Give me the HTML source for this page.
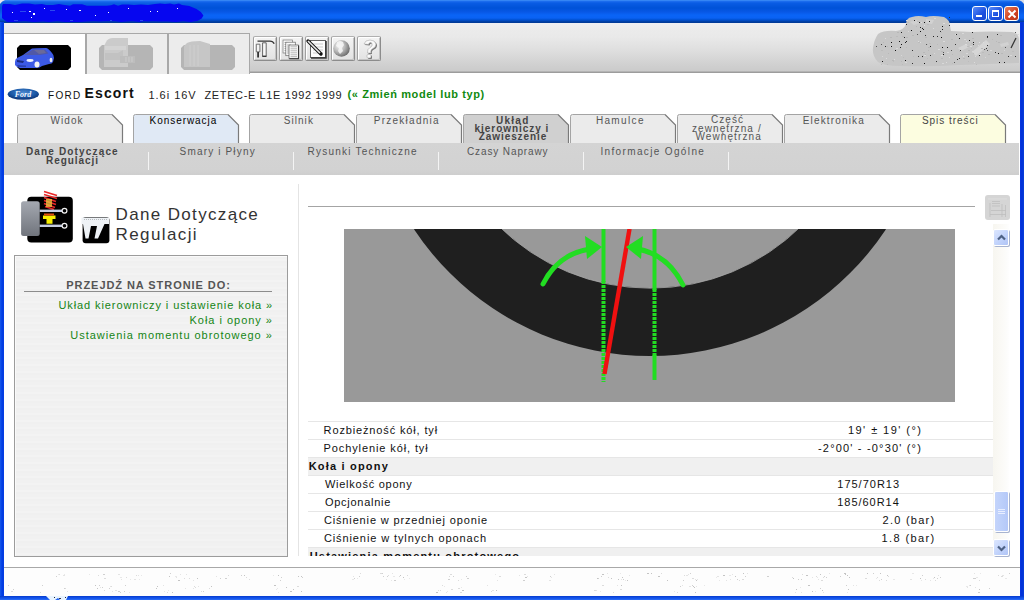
<!DOCTYPE html>
<html><head><meta charset="utf-8">
<style>
*{margin:0;padding:0;box-sizing:border-box}
html,body{width:1024px;height:600px;overflow:hidden;background:#fff;font-family:"Liberation Sans",sans-serif}
.a{position:absolute}
.t{position:absolute;white-space:nowrap;line-height:1}
#title{left:0;top:0;width:1024px;height:23px;background:linear-gradient(#4a9af8 0,#2070f0 1px,#0a5ce4 3px,#0052d8 8px,#0858e6 12px,#0a64f6 15px,#0a62f4 18px,#0050d0 20px,#003a98 22px,#003a98 23px)}
#lb{left:0;top:22px;width:4px;height:578px;background:linear-gradient(90deg,#1a5ae8,#0a4ae8 1px,#0038e0 3px,#0a44e8)}
#rb{left:1020px;top:22px;width:4px;height:578px;background:linear-gradient(90deg,#0838e0,#0030d8 2px,#0a40d8)}
#bb{left:0;top:596px;width:1024px;height:4px;background:linear-gradient(#0838c8,#0a48e0 1px,#1a5cf0 3px,#3070f4 4px)}
.tab{position:absolute;top:114px;height:30px;border:1px solid #9a9a9a;border-bottom:none;border-radius:3px 0 0 0;background:#ebebeb}
.tab .c{position:absolute;right:-1px;top:-1px;width:11px;height:11px;overflow:hidden}
.tl{top:116px;text-align:center;font-size:10px;color:#555;letter-spacing:0.6px}
.tabt{position:absolute;top:0;left:0;width:100%;text-align:center;font-size:10px;color:#555;letter-spacing:0.6px}
.sep{position:absolute;top:152px;width:1px;height:18px;background:#f4f4f4}
.sub{position:absolute;top:146px;font-size:10px;color:#555;letter-spacing:0.9px;white-space:nowrap;line-height:1}
.tb{position:absolute;top:36px;width:24px;height:25px;border:1px solid #8c8c8c;border-top-color:#b0b0b0;border-left-color:#a0a0a0;border-radius:2px;background:linear-gradient(#f4f4f4,#e2e2e2);box-shadow:inset 1px 1px 0 #fff,inset -1px -1px 0 #c4c4c4}
.sbb{position:absolute;left:993px;width:16px;border:1px solid #fff;border-radius:2px;background:linear-gradient(135deg,#dce6fe,#c0d2fb 60%,#b0c4f6);box-shadow:1px 1px 0 #a8b4d0}
.row{position:absolute;left:308px;width:685px;height:18px;border-top:1px solid #e6e6e6}
.rt{position:absolute;font-size:11px;color:#111;white-space:nowrap;line-height:1;letter-spacing:0.5px}
</style></head><body>
<!-- title bar -->
<div id="title" class="a"></div>
<svg class="a" style="left:0;top:0" width="210" height="23" viewBox="0 0 210 23">
<path d="M3.0 4.0 L10.0 4.0 L15.0 5.0 L22.0 3.5 L29.0 3.5 L35.0 4.5 L42.0 4.0 L46.0 5.0 L53.0 5.0 L59.0 4.0 L63.0 4.8 L70.0 5.8 L73.0 4.3 L77.0 4.3 L82.0 4.3 L87.0 5.8 L94.0 5.8 L100.0 5.8 L107.0 5.8 L111.0 5.3 L114.0 4.3 L118.0 5.8 L122.0 4.5 L128.0 4.5 L134.0 5.0 L141.0 4.5 L148.0 5.0 L155.0 4.0 L160.0 3.5 L165.0 4.0 L170.0 3.5 L174.0 4.5 L179.0 3.5 L182.0 5.0 L189.3 6.0 L196.5 9.0 L200.9 12.0 L203.4 15.5 L201.7 18.5 L197.4 21.0 L195.0 21.3 L191.0 21.9 L183.0 21.3 L176.0 21.9 L168.0 21.6 L160.0 21.6 L152.0 21.3 L148.0 21.6 L144.0 21.3 L140.0 21.9 L132.0 21.3 L127.0 21.6 L121.0 21.9 L115.0 21.3 L106.0 21.3 L100.0 21.6 L94.0 21.3 L87.0 21.6 L80.0 21.9 L73.0 21.9 L65.0 21.9 L57.0 21.3 L49.0 21.9 L43.0 21.6 L34.0 21.9 L25.0 21.3 L19.0 21.6 L13.0 21.9 L7.0 21.9 L2.0 18.0 L2.0 6.0Z" fill="#0606f0"/>
<g fill="#fff"><rect x="12" y="12" width="1" height="1"/><rect x="29" y="11" width="2" height="1"/><rect x="33" y="13" width="2" height="2"/><rect x="44" y="8" width="1" height="1"/><rect x="31" y="17" width="1" height="1"/><rect x="66" y="9" width="1" height="1"/><rect x="79" y="10" width="2" height="1"/><rect x="95" y="15" width="1" height="1"/><rect x="128" y="8" width="1" height="1"/><rect x="157" y="11" width="1" height="1"/><rect x="177" y="8" width="1" height="1"/><rect x="150" y="11" width="1" height="1"/><rect x="108" y="12" width="1" height="1"/></g>
<g fill="#2a48f0"><rect x="20" y="11" width="6" height="1"/><rect x="50" y="10" width="5" height="1"/><rect x="70" y="20" width="3" height="1"/><rect x="110" y="20" width="2" height="1"/><rect x="14" y="20" width="4" height="1"/><rect x="140" y="20" width="3" height="1"/></g>
</svg>
<!-- window buttons -->
<div class="a" style="left:972px;top:6px;width:15px;height:15px;border:1px solid #fff;border-radius:3px;background:linear-gradient(135deg,#5a8cf8,#1c50e0 60%,#1a48d0)"><div class="a" style="left:3px;top:8px;width:6px;height:2px;background:#fff"></div></div>
<div class="a" style="left:988px;top:6px;width:15px;height:15px;border:1px solid #fff;border-radius:3px;background:linear-gradient(135deg,#5a8cf8,#1c50e0 60%,#1a48d0)"><div class="a" style="left:3px;top:3px;width:7px;height:7px;border:1px solid #fff;border-top-width:2px"></div></div>
<div class="a" style="left:1004px;top:6px;width:15px;height:15px;border:1px solid #fff;border-radius:3px;background:linear-gradient(135deg,#e8805a,#d04020 60%,#b83818)">
<svg class="a" style="left:2px;top:2px" width="10" height="10" viewBox="0 0 10 10"><path d="M1.5 1.5L8.5 8.5M8.5 1.5L1.5 8.5" stroke="#fff" stroke-width="2"/></svg></div>
<div id="lb" class="a"></div><div id="rb" class="a"></div><div id="bb" class="a"></div>
<svg class="a" style="left:0;top:0" width="6" height="6"><path d="M0 0H5Q2 1 0 4Z" fill="#e8e4ec"/></svg>
<svg class="a" style="left:1018px;top:0" width="6" height="6"><path d="M6 0H1Q4 1 6 4Z" fill="#d8dce4"/></svg>
<svg class="a" style="left:44px;top:594px" width="28" height="6" viewBox="44 594 28 6"><path d="M46 596H68L66 600H60L58 598L55 600H50Z" fill="#e8f4ff"/><rect x="54" y="597" width="1" height="1" fill="#223"/><rect x="59" y="598" width="2" height="1" fill="#334"/><rect x="65" y="597" width="1" height="1" fill="#223"/></svg>

<!-- top strip -->
<div class="a" style="left:4px;top:23px;width:1016px;height:49px;background:linear-gradient(#eeeef2 0,#ebebeb 6px,#e9e9e9 14px,#dedede 28px,#d0d0d0 42px,#cacaca 49px)"></div>
<div class="a" style="left:4px;top:71px;width:1016px;height:1px;background:#b4b4b4"></div>
<div class="a" style="left:4px;top:72px;width:1016px;height:1px;background:#9c9c9c"></div>
<div class="a" style="left:4px;top:33px;width:246px;height:1px;background:#a8a8a8"></div>
<!-- big tabs -->
<div class="a" style="left:4px;top:34px;width:81px;height:40px;background:#fff"></div>
<div class="a" style="left:85px;top:34px;width:2px;height:40px;background:#a8a8a8"></div>
<div class="a" style="left:87px;top:34px;width:80px;height:40px;background:#ececec"></div>
<div class="a" style="left:167px;top:34px;width:2px;height:40px;background:#a8a8a8"></div>
<div class="a" style="left:169px;top:34px;width:80px;height:40px;background:#ececec"></div>
<div class="a" style="left:249px;top:34px;width:1px;height:40px;background:#a8a8a8"></div>

<!-- big tab icons -->
<svg class="a" style="left:0;top:30px" width="250" height="45" viewBox="0 30 250 45">
<path d="M20 45H68L71 48V67L68 70H20L17 67V48Z" fill="#000"/>
<path d="M15 62Q15 59 17 58L23 55L32 48.5Q34 48 46 48Q48 48 52 53Q54 55 54 58L53 62Q52 64 49 64L42 66Q40 68 36 68L20 68Q16 67 15 65Z" fill="#3c5ae6"/>
<path d="M24 55L33 49.5H45L48.5 53.5L40 55Z" fill="#5058a8"/>
<path d="M34 50L44 50L46 53L39 54Z" fill="#6a6a9a"/>
<path d="M17 60L24 61L23 63L17 62Z" fill="#1a2a80"/>
<ellipse cx="30" cy="60.5" rx="3.5" ry="1.4" fill="#f0f4ff"/>
<path d="M17 65L26 65.5L26 67L18 67Z" fill="#2a40b0"/>
<ellipse cx="37" cy="64.5" rx="2.5" ry="3" fill="#f4f4f4"/>
<ellipse cx="51" cy="60" rx="1.4" ry="2.2" fill="#e8e8f0"/>
<path d="M102 45H150L153 48V67L150 70H102L99 67V48Z" fill="#b5b5b5"/>
<path d="M106 42Q108 38 113 38H128V67H104V46Z" fill="#cbcbcb"/>
<path d="M105 46H126V50H105Z" fill="#d4d4d4"/>
<path d="M105 53H118L123 50V60H105Z" fill="#c2c2c2"/>
<path d="M120 56H135V63H120Z" fill="#bdbdbd"/>
<path d="M126 57v5M129 57v5M132 57v5" stroke="#d0d0d0" stroke-width="0.8"/>
<path d="M184 45H232L235 48V67L232 70H184L181 67V48Z" fill="#b5b5b5"/>
<path d="M187 43Q190 41 200 41L210 44V67H184V46Z" fill="#c6c6c6"/>
<path d="M190 45v21M194 45v21M198 45v21" stroke="#d2d2d2" stroke-width="0.8"/>
</svg>
<!-- toolbar buttons -->
<div class="tb" style="left:253px"></div><div class="tb" style="left:279px"></div><div class="tb" style="left:305px"></div><div class="tb" style="left:331px"></div><div class="tb" style="left:357px"></div>
<svg class="a" style="left:250px;top:32px" width="135" height="32" viewBox="250 32 135 32">
<defs><radialGradient id="gl" cx="0.35" cy="0.35" r="0.7"><stop offset="0" stop-color="#f4f4f4"/><stop offset="0.5" stop-color="#b8b8b8"/><stop offset="1" stop-color="#6a6a6a"/></radialGradient></defs>
<path d="M256.3 44.2h3.6v7.6h-3.6z" fill="#f4f4f4" stroke="#555" stroke-width="0.8"/>
<path d="M258.1 52v5.5" stroke="#333" stroke-width="1.8"/>
<path d="M262.6 42.8h3.6v13.4h-3.6z" fill="#f8f8f8" stroke="#444" stroke-width="0.8"/>
<path d="M257.5 41.2H270Q273 41.2 274.2 43.8" fill="none" stroke="#333" stroke-width="1.3"/>
<path d="M262.3 56.3h4.2" stroke="#222" stroke-width="1"/>
<rect x="283" y="40" width="9.5" height="13" fill="#fafafa" stroke="#777" stroke-width="0.7"/>
<path d="M284.5 42.5h4M284.5 44.5h4M284.5 46.5h4M284.5 48.5h4M284.5 50.5h4" stroke="#888" stroke-width="0.6"/>
<rect x="285.8" y="42.2" width="9.5" height="13.5" fill="#fafafa" stroke="#666" stroke-width="0.7"/>
<path d="M287 45h4M287 47h4M287 49h4M287 51h4M287 53h4" stroke="#888" stroke-width="0.6"/>
<rect x="289" y="45" width="9.3" height="13.3" fill="#fcfcfc" stroke="#555" stroke-width="0.7"/>
<path d="M290.5 46.8h6.5M290.5 48.8h6.5M290.5 50.8h6.5M290.5 52.8h6.5M290.5 54.8h6.5M290.5 56.6h6.5" stroke="#999" stroke-width="0.7"/>
<path d="M298.6 45.5v13.2h-9.3" fill="none" stroke="#333" stroke-width="1.1"/>

<rect x="310.5" y="40.5" width="15" height="17" fill="#fcfcfc" stroke="#555" stroke-width="0.9"/>
<path d="M326 41v17h-15" stroke="#333" stroke-width="1.5" fill="none"/>
<path d="M313 44h10M313 47h10M313 50h10M313 53h10" stroke="#aaa" stroke-width="0.6"/>
<path d="M308 41L321 54" stroke="#111" stroke-width="3.4" stroke-linecap="round"/>
<path d="M308 41L320 53" stroke="#e8e8e8" stroke-width="1.6"/>
<circle cx="341.5" cy="48.5" r="8.3" fill="url(#gl)"/>
<path d="M337 42q3-2 6 0l1 3-2 3 1 3-3 3-2-3 1-3-3-2z" fill="#f6f6f6" opacity="0.85"/>
<path d="M364 44q1-4 6-4t6 4q0 3-3 4.5t-2 4.5h-3.5q-0.5-4 2.5-5.5t2-3.5q0-1.5-1.5-1.5t-2 2z" fill="#777" transform="translate(1 1)"/>
<path d="M364 44q1-4 6-4t6 4q0 3-3 4.5t-2 4.5h-3.5q-0.5-4 2.5-5.5t2-3.5q0-1.5-1.5-1.5t-2 2z" fill="#fafafa" stroke="#999" stroke-width="0.5"/>
<rect x="367" y="54.5" width="4" height="3.5" rx="1" fill="#777" transform="translate(1 1)"/>
<rect x="367" y="54.5" width="4" height="3.5" rx="1" fill="#fafafa" stroke="#999" stroke-width="0.5"/>
</svg>
<!-- top-right faded image -->
<svg class="a" style="left:866px;top:12px" width="154" height="62" viewBox="866 12 154 62">
<path d="M906 24Q906 18 912 17Q918 15 926 17Q932 15 944 17Q950 20 950 26L951 31L972 32Q990 31 1012 32Q1019 33 1019 40V63Q990 64 960 65Q930 67 900 66Q884 66 878 62Q872 56 873 48Q874 40 878 34Q884 30 896 31Q904 30 906 24Z" fill="#c6c6c6"/>
<path d="M972 52L986 40L990 44L976 56Z" fill="#d6d6d6"/>
<path d="M958 48l8-4 3 3-8 4z" fill="#d4d4d4"/>
<path d="M1000 44l8-2 1 3-8 2z" fill="#d2d2d2"/>
<path d="M910 22l6-2 4 3-6 2z" fill="#d0d0d0"/><path d="M926 19l8 1-2 4-6-1z" fill="#d2d2d2"/>
<path d="M1011 48L1016 38" stroke="#333" stroke-width="1.2"/>
<rect x="952" y="54" width="1" height="1" fill="#b8b8b8"/><rect x="921" y="22" width="1" height="1" fill="#dcdcdc"/><rect x="905" y="62" width="2" height="1" fill="#d8d8d8"/><rect x="983" y="42" width="1" height="1" fill="#dcdcdc"/><rect x="975" y="56" width="1" height="1" fill="#d8d8d8"/><rect x="923" y="52" width="2" height="1" fill="#b8b8b8"/><rect x="901" y="61" width="1" height="1" fill="#b8b8b8"/><rect x="890" y="46" width="1" height="1" fill="#d8d8d8"/><rect x="881" y="64" width="1" height="1" fill="#bcbcbc"/><rect x="920" y="27" width="1" height="1" fill="#d8d8d8"/><rect x="916" y="26" width="1" height="1" fill="#b8b8b8"/><rect x="896" y="36" width="2" height="1" fill="#bcbcbc"/><rect x="981" y="48" width="2" height="1" fill="#b8b8b8"/><rect x="925" y="54" width="1" height="1" fill="#b8b8b8"/><rect x="918" y="42" width="2" height="1" fill="#bcbcbc"/><rect x="966" y="41" width="1" height="1" fill="#dcdcdc"/><rect x="896" y="48" width="2" height="1" fill="#d8d8d8"/><rect x="893" y="61" width="1" height="1" fill="#bcbcbc"/><rect x="1001" y="53" width="2" height="1" fill="#b8b8b8"/><rect x="943" y="23" width="2" height="1" fill="#dcdcdc"/><rect x="906" y="37" width="2" height="1" fill="#b8b8b8"/><rect x="918" y="41" width="1" height="1" fill="#dcdcdc"/><rect x="890" y="37" width="2" height="1" fill="#b8b8b8"/><rect x="963" y="56" width="1" height="1" fill="#d8d8d8"/><rect x="941" y="58" width="2" height="1" fill="#b8b8b8"/><rect x="927" y="58" width="1" height="1" fill="#bcbcbc"/><rect x="971" y="48" width="1" height="1" fill="#bcbcbc"/><rect x="902" y="64" width="1" height="1" fill="#bcbcbc"/><rect x="901" y="55" width="1" height="1" fill="#d8d8d8"/><rect x="937" y="44" width="1" height="1" fill="#bcbcbc"/><rect x="922" y="57" width="1" height="1" fill="#bcbcbc"/><rect x="897" y="32" width="2" height="1" fill="#b8b8b8"/><rect x="959" y="51" width="1" height="1" fill="#bcbcbc"/><rect x="985" y="57" width="1" height="1" fill="#d8d8d8"/><rect x="970" y="46" width="2" height="1" fill="#dcdcdc"/><rect x="1010" y="55" width="2" height="1" fill="#d8d8d8"/><rect x="998" y="42" width="2" height="1" fill="#b8b8b8"/><rect x="951" y="39" width="2" height="1" fill="#b8b8b8"/><rect x="941" y="51" width="2" height="1" fill="#b8b8b8"/><rect x="934" y="53" width="1" height="1" fill="#d8d8d8"/><rect x="976" y="64" width="1" height="1" fill="#bcbcbc"/><rect x="952" y="63" width="1" height="1" fill="#bcbcbc"/><rect x="929" y="43" width="2" height="1" fill="#bcbcbc"/><rect x="934" y="18" width="2" height="1" fill="#d8d8d8"/><rect x="908" y="31" width="1" height="1" fill="#d8d8d8"/><rect x="978" y="45" width="1" height="1" fill="#d8d8d8"/><rect x="885" y="38" width="1" height="1" fill="#dcdcdc"/><rect x="965" y="44" width="2" height="1" fill="#dcdcdc"/><rect x="988" y="54" width="2" height="1" fill="#b8b8b8"/><rect x="946" y="62" width="1" height="1" fill="#dcdcdc"/><rect x="1000" y="35" width="2" height="1" fill="#b8b8b8"/><rect x="941" y="55" width="2" height="1" fill="#dcdcdc"/><rect x="933" y="28" width="1" height="1" fill="#dcdcdc"/><rect x="882" y="56" width="1" height="1" fill="#d8d8d8"/><rect x="941" y="32" width="1" height="1" fill="#bcbcbc"/><rect x="928" y="50" width="1" height="1" fill="#b8b8b8"/><rect x="894" y="59" width="1" height="1" fill="#dcdcdc"/><rect x="967" y="46" width="2" height="1" fill="#bcbcbc"/><rect x="925" y="37" width="2" height="1" fill="#b8b8b8"/><rect x="906" y="20" width="2" height="1" fill="#d8d8d8"/><rect x="926" y="44" width="2" height="1" fill="#bcbcbc"/><rect x="955" y="34" width="2" height="1" fill="#dcdcdc"/><rect x="966" y="53" width="2" height="1" fill="#d8d8d8"/><rect x="982" y="52" width="2" height="1" fill="#bcbcbc"/><rect x="892" y="60" width="2" height="1" fill="#b8b8b8"/><rect x="955" y="34" width="1" height="1" fill="#dcdcdc"/><rect x="963" y="58" width="2" height="1" fill="#b8b8b8"/><rect x="902" y="36" width="2" height="1" fill="#bcbcbc"/><rect x="984" y="49" width="2" height="1" fill="#b8b8b8"/><rect x="974" y="62" width="1" height="1" fill="#dcdcdc"/><rect x="964" y="39" width="2" height="1" fill="#d8d8d8"/><rect x="973" y="53" width="1" height="1" fill="#bcbcbc"/><rect x="1016" y="39" width="1" height="1" fill="#bcbcbc"/><rect x="917" y="21" width="2" height="1" fill="#bcbcbc"/><rect x="1017" y="34" width="2" height="1" fill="#d8d8d8"/><rect x="888" y="53" width="1" height="1" fill="#b8b8b8"/><rect x="942" y="63" width="2" height="1" fill="#d8d8d8"/><rect x="908" y="22" width="1" height="1" fill="#bcbcbc"/><rect x="928" y="47" width="2" height="1" fill="#b8b8b8"/><rect x="972" y="38" width="2" height="1" fill="#b8b8b8"/><rect x="906" y="47" width="1" height="1" fill="#bcbcbc"/><rect x="883" y="42" width="1" height="1" fill="#b8b8b8"/><rect x="990" y="50" width="2" height="1" fill="#d8d8d8"/><rect x="979" y="42" width="1" height="1" fill="#dcdcdc"/><rect x="913" y="56" width="1" height="1" fill="#bcbcbc"/><rect x="971" y="43" width="2" height="1" fill="#b8b8b8"/><rect x="887" y="46" width="1" height="1" fill="#b8b8b8"/><rect x="949" y="57" width="1" height="1" fill="#dcdcdc"/><rect x="887" y="64" width="1" height="1" fill="#bcbcbc"/><rect x="922" y="27" width="1" height="1" fill="#b8b8b8"/><rect x="932" y="54" width="1" height="1" fill="#bcbcbc"/><rect x="943" y="41" width="2" height="1" fill="#dcdcdc"/><rect x="1012" y="51" width="2" height="1" fill="#bcbcbc"/><rect x="996" y="41" width="1" height="1" fill="#b8b8b8"/><rect x="927" y="24" width="2" height="1" fill="#bcbcbc"/><rect x="886" y="58" width="1" height="1" fill="#dcdcdc"/><rect x="992" y="39" width="1" height="1" fill="#bcbcbc"/><rect x="979" y="54" width="2" height="1" fill="#dcdcdc"/><rect x="938" y="49" width="2" height="1" fill="#dcdcdc"/><rect x="1004" y="50" width="1" height="1" fill="#d8d8d8"/><rect x="924" y="25" width="1" height="1" fill="#dcdcdc"/><rect x="962" y="33" width="2" height="1" fill="#d8d8d8"/><rect x="1011" y="48" width="1" height="1" fill="#b8b8b8"/><rect x="920" y="42" width="1" height="1" fill="#dcdcdc"/><rect x="881" y="50" width="2" height="1" fill="#bcbcbc"/><rect x="912" y="35" width="2" height="1" fill="#b8b8b8"/><rect x="1014" y="35" width="1" height="1" fill="#bcbcbc"/><rect x="907" y="22" width="2" height="1" fill="#bcbcbc"/><rect x="903" y="57" width="1" height="1" fill="#bcbcbc"/><rect x="968" y="61" width="1" height="1" fill="#bcbcbc"/><rect x="947" y="52" width="2" height="1" fill="#d8d8d8"/><rect x="924" y="55" width="2" height="1" fill="#dcdcdc"/><rect x="968" y="50" width="2" height="1" fill="#b8b8b8"/><rect x="972" y="51" width="2" height="1" fill="#d8d8d8"/><rect x="920" y="27" width="1" height="1" fill="#222"/><rect x="919" y="22" width="1" height="1" fill="#222"/><rect x="895" y="50" width="1" height="1" fill="#111"/><rect x="973" y="44" width="1" height="1" fill="#333"/><rect x="920" y="31" width="1" height="1" fill="#111"/><rect x="955" y="44" width="1" height="1" fill="#333"/><rect x="947" y="47" width="1" height="1" fill="#111"/><rect x="937" y="36" width="1" height="1" fill="#333"/><rect x="899" y="41" width="1" height="1" fill="#111"/><rect x="885" y="46" width="1" height="1" fill="#222"/><rect x="973" y="42" width="1" height="1" fill="#111"/><rect x="941" y="37" width="1" height="1" fill="#111"/><rect x="986" y="48" width="1" height="1" fill="#333"/><rect x="905" y="42" width="1" height="1" fill="#222"/><rect x="949" y="17" width="1" height="1" fill="#333"/><rect x="926" y="44" width="1" height="1" fill="#555"/><rect x="956" y="34" width="1" height="1" fill="#222"/><rect x="995" y="52" width="1" height="1" fill="#333"/><rect x="918" y="56" width="1" height="1" fill="#333"/><rect x="930" y="55" width="1" height="1" fill="#333"/><rect x="912" y="63" width="1" height="1" fill="#333"/><rect x="972" y="32" width="1" height="1" fill="#222"/><rect x="997" y="34" width="1" height="1" fill="#333"/><rect x="930" y="46" width="1" height="1" fill="#111"/><rect x="924" y="63" width="1" height="1" fill="#111"/><rect x="917" y="34" width="1" height="1" fill="#555"/><rect x="987" y="37" width="1" height="1" fill="#333"/><rect x="876" y="46" width="1" height="1" fill="#555"/><rect x="891" y="46" width="1" height="1" fill="#111"/><rect x="987" y="50" width="1" height="1" fill="#555"/><rect x="959" y="38" width="1" height="1" fill="#111"/><rect x="891" y="42" width="1" height="1" fill="#111"/><rect x="969" y="40" width="1" height="1" fill="#111"/><rect x="901" y="32" width="1" height="1" fill="#222"/><rect x="900" y="47" width="1" height="1" fill="#222"/><rect x="949" y="25" width="1" height="1" fill="#333"/><rect x="959" y="58" width="1" height="1" fill="#222"/><rect x="933" y="36" width="1" height="1" fill="#222"/><rect x="922" y="56" width="1" height="1" fill="#222"/><rect x="923" y="29" width="1" height="1" fill="#222"/><rect x="906" y="24" width="1" height="1" fill="#222"/><rect x="882" y="61" width="1" height="1" fill="#111"/><rect x="942" y="26" width="1" height="1" fill="#111"/><rect x="942" y="29" width="1" height="1" fill="#222"/><rect x="1005" y="47" width="1" height="1" fill="#555"/><rect x="987" y="36" width="1" height="1" fill="#111"/><rect x="943" y="54" width="1" height="1" fill="#111"/><rect x="943" y="52" width="1" height="1" fill="#555"/><rect x="906" y="41" width="1" height="1" fill="#222"/><rect x="940" y="31" width="1" height="1" fill="#333"/><rect x="901" y="44" width="1" height="1" fill="#111"/><rect x="922" y="28" width="1" height="1" fill="#222"/><rect x="960" y="50" width="1" height="1" fill="#333"/><rect x="929" y="21" width="1" height="1" fill="#222"/><rect x="987" y="45" width="1" height="1" fill="#333"/><rect x="924" y="22" width="1" height="1" fill="#111"/><rect x="951" y="50" width="1" height="1" fill="#555"/><rect x="881" y="44" width="1" height="1" fill="#555"/><rect x="942" y="47" width="1" height="1" fill="#111"/><rect x="957" y="59" width="1" height="1" fill="#333"/><rect x="1004" y="62" width="1" height="1" fill="#222"/><rect x="998" y="53" width="1" height="1" fill="#111"/><rect x="984" y="49" width="1" height="1" fill="#555"/><rect x="1015" y="56" width="1" height="1" fill="#333"/><rect x="1015" y="32" width="1" height="1" fill="#555"/><rect x="925" y="35" width="1" height="1" fill="#333"/><rect x="914" y="20" width="1" height="1" fill="#222"/><rect x="904" y="37" width="1" height="1" fill="#222"/><rect x="979" y="55" width="1" height="1" fill="#111"/><rect x="905" y="60" width="1" height="1" fill="#111"/><rect x="911" y="30" width="1" height="1" fill="#111"/><rect x="954" y="62" width="1" height="1" fill="#555"/><rect x="999" y="62" width="1" height="1" fill="#111"/><rect x="936" y="61" width="1" height="1" fill="#333"/><rect x="968" y="56" width="1" height="1" fill="#222"/><rect x="912" y="50" width="1" height="1" fill="#333"/><rect x="1008" y="56" width="1" height="1" fill="#333"/>
</svg>
<!-- content placeholder -->
<!-- ford line -->
<svg class="a" style="left:6px;top:87px" width="36" height="15" viewBox="6 87 36 15">
<defs><radialGradient id="fg" cx="0.5" cy="0.35" r="0.65"><stop offset="0" stop-color="#4a8ad0"/><stop offset="0.6" stop-color="#1c5aa8"/><stop offset="1" stop-color="#0c3070"/></radialGradient></defs>
<ellipse cx="23.3" cy="94.2" rx="15.6" ry="5.6" fill="url(#fg)"/>
<text x="23" y="97" text-anchor="middle" font-family="Liberation Serif" font-style="italic" font-weight="bold" font-size="8" fill="#f4f8ff">Ford</text>
</svg>

<!-- nav tabs -->
<svg class="a" style="left:0;top:113px" width="1024" height="32"><path d="M17.5 32V3.5Q17.5 1.5 19.5 1.5H112.0L122.5 12V32Z" fill="#ebebeb"/><path d="M17.5 32V3.5Q17.5 1.5 19.5 1.5H112.0" fill="none" stroke="#a4a4a4" stroke-width="1"/><path d="M112.0 1.5L122.5 12V32" fill="none" stroke="#7a7a7a" stroke-width="1.2"/><path d="M133.5 32V3.5Q133.5 1.5 135.5 1.5H228.0L238.5 12V32Z" fill="#e0e9f5"/><path d="M133.5 32V3.5Q133.5 1.5 135.5 1.5H228.0" fill="none" stroke="#a4a4a4" stroke-width="1"/><path d="M228.0 1.5L238.5 12V32" fill="none" stroke="#7a7a7a" stroke-width="1.2"/><path d="M249.5 32V3.5Q249.5 1.5 251.5 1.5H344.0L354.5 12V32Z" fill="#ebebeb"/><path d="M249.5 32V3.5Q249.5 1.5 251.5 1.5H344.0" fill="none" stroke="#a4a4a4" stroke-width="1"/><path d="M344.0 1.5L354.5 12V32" fill="none" stroke="#7a7a7a" stroke-width="1.2"/><path d="M356.5 32V3.5Q356.5 1.5 358.5 1.5H451.0L461.5 12V32Z" fill="#ebebeb"/><path d="M356.5 32V3.5Q356.5 1.5 358.5 1.5H451.0" fill="none" stroke="#a4a4a4" stroke-width="1"/><path d="M451.0 1.5L461.5 12V32" fill="none" stroke="#7a7a7a" stroke-width="1.2"/><path d="M463.5 32V3.5Q463.5 1.5 465.5 1.5H558.0L568.5 12V32Z" fill="#d0d0d0"/><path d="M463.5 32V3.5Q463.5 1.5 465.5 1.5H558.0" fill="none" stroke="#a4a4a4" stroke-width="1"/><path d="M558.0 1.5L568.5 12V32" fill="none" stroke="#7a7a7a" stroke-width="1.2"/><path d="M570.5 32V3.5Q570.5 1.5 572.5 1.5H665.0L675.5 12V32Z" fill="#ebebeb"/><path d="M570.5 32V3.5Q570.5 1.5 572.5 1.5H665.0" fill="none" stroke="#a4a4a4" stroke-width="1"/><path d="M665.0 1.5L675.5 12V32" fill="none" stroke="#7a7a7a" stroke-width="1.2"/><path d="M677.5 32V3.5Q677.5 1.5 679.5 1.5H772.0L782.5 12V32Z" fill="#ebebeb"/><path d="M677.5 32V3.5Q677.5 1.5 679.5 1.5H772.0" fill="none" stroke="#a4a4a4" stroke-width="1"/><path d="M772.0 1.5L782.5 12V32" fill="none" stroke="#7a7a7a" stroke-width="1.2"/><path d="M784.5 32V3.5Q784.5 1.5 786.5 1.5H879.0L889.5 12V32Z" fill="#ebebeb"/><path d="M784.5 32V3.5Q784.5 1.5 786.5 1.5H879.0" fill="none" stroke="#a4a4a4" stroke-width="1"/><path d="M879.0 1.5L889.5 12V32" fill="none" stroke="#7a7a7a" stroke-width="1.2"/><path d="M900.5 32V3.5Q900.5 1.5 902.5 1.5H995.0L1005.5 12V32Z" fill="#fcfde0"/><path d="M900.5 32V3.5Q900.5 1.5 902.5 1.5H995.0" fill="none" stroke="#a4a4a4" stroke-width="1"/><path d="M995.0 1.5L1005.5 12V32" fill="none" stroke="#7a7a7a" stroke-width="1.2"/></svg>
<!-- sub nav -->
<div class="a" style="left:4px;top:143px;width:1015px;height:32px;background:linear-gradient(#d4d4d4,#d2d2d2 85%,#cecece)"></div>
<div class="sep" style="left:148px"></div>
<div class="sep" style="left:293px"></div>
<div class="sep" style="left:438px"></div>
<div class="sep" style="left:583px"></div>
<div class="sep" style="left:728px"></div>

<!-- left panel -->
<svg class="a" style="left:18px;top:186px" width="96" height="62" viewBox="18 186 96 62">
<defs><linearGradient id="tg" x1="0" x2="0" y1="0" y2="1"><stop offset="0" stop-color="#a4a8b0"/><stop offset="1" stop-color="#70747c"/></linearGradient></defs>
<rect x="27.3" y="196.8" width="45.5" height="45.8" rx="4" fill="#000"/>
<rect x="21.1" y="201.3" width="18.6" height="34.8" rx="2.5" fill="url(#tg)"/>
<path d="M44 191.5L57 195.5M44 194.5L57 198.5M44 197.5L56 201.5M44 200.5L56 204.5M44 203.5L55 207.5M45 206.5L54 209.5" stroke="#e82828" stroke-width="1.8"/>
<path d="M46 199h6v8h-6z" fill="#f0c040" opacity="0.8"/>
<path d="M39.7 210.8H62" stroke="#c4cce0" stroke-width="2.4"/><circle cx="64.5" cy="210.8" r="2.4" fill="#000" stroke="#f0f0f0" stroke-width="1.2"/>
<path d="M39.7 225.8H62" stroke="#c4cce0" stroke-width="2.4"/><circle cx="64.5" cy="225.8" r="2.4" fill="#000" stroke="#f0f0f0" stroke-width="1.2"/>
<path d="M43 215.5H55.5V219H52.5V223.8H46.5V219H43Z" fill="#f6ee00"/>
<path d="M44 213.5h10v2h-10z" fill="#e05010"/>
<rect x="82.6" y="217" width="26.8" height="26.3" rx="3" fill="#000"/>
<path d="M81.5 217.5H109V224H104.5L98 238.5H94.5L97 226H91L88.5 238.5H85.5L83 224H81.5Z" fill="#eef2f6"/>
<path d="M84 219.5h24" stroke="#b8bcc0" stroke-width="1" stroke-dasharray="1 1"/>
</svg>
<div class="a" style="left:298px;top:184px;width:1px;height:372px;background:#e4e4e4"></div>
<div class="a" style="left:14px;top:255px;width:274px;height:302px;border:1px solid #9c9c9c;background:repeating-linear-gradient(#f1f1f1 0,#f1f1f1 3px,#f3f3f3 3px,#f3f3f3 5px,#f0f0f0 5px,#f0f0f0 7px);box-shadow:inset 1px 1px 0 #fafafa"></div>
<div class="a" style="left:24px;top:291px;width:248px;height:1px;background:#8c8c8c"></div>

<!-- right content -->
<div class="a" style="left:308px;top:206px;width:667px;height:1px;background:#a4a4a4"></div>
<div class="a" style="left:344px;top:229px;width:611px;height:173px;background:#999;overflow:hidden">
<svg width="611" height="173" viewBox="344 229 611 173" style="display:block">
<defs><clipPath id="ring"><path d="M650 73m-283 0a283 283 0 1 0 566 0a283 283 0 1 0 -566 0zM650 73m-215 0a215 215 0 1 1 430 0a215 215 0 1 1 -430 0z" fill-rule="evenodd"/></clipPath></defs>
<path d="M650 73m-283 0a283 283 0 1 0 566 0a283 283 0 1 0 -566 0zM650 73m-215 0a215 215 0 1 1 430 0a215 215 0 1 1 -430 0z" fill="#1f1f1f" fill-rule="evenodd"/>
<circle cx="650" cy="73" r="215.2" fill="none" stroke="#a8a8a8" stroke-width="0.8"/>
<line x1="603.5" y1="281" x2="603.5" y2="382" stroke="#22dd22" stroke-width="4" stroke-dasharray="3 1"/>
<line x1="603.5" y1="229" x2="603.5" y2="282" stroke="#22dd22" stroke-width="4"/>
<line x1="654.5" y1="289" x2="654.5" y2="356" stroke="#22dd22" stroke-width="4" stroke-dasharray="3 1"/>
<line x1="654.5" y1="229" x2="654.5" y2="290" stroke="#22dd22" stroke-width="4"/>
<line x1="654.5" y1="355" x2="654.5" y2="380" stroke="#22dd22" stroke-width="4"/>
<line x1="629.5" y1="229" x2="604.5" y2="374" stroke="#f01010" stroke-width="4.4"/>
<path d="M543 284Q558 254 590 249" fill="none" stroke="#22dd22" stroke-width="5" stroke-linecap="round"/>
<path d="M602 247L585 236L587 259Z" fill="#22dd22"/>
<path d="M683 285Q668 255 638 249" fill="none" stroke="#22dd22" stroke-width="5" stroke-linecap="round"/>
<path d="M626 247L643 236L641 259Z" fill="#22dd22"/>
</svg></div>

<!-- table -->
<div class="row" style="top:421px"></div>
<div class="row" style="top:439px"></div>
<div class="row" style="top:457px;background:#f0f0f0"></div>
<div class="row" style="top:475px"></div>
<div class="row" style="top:493px"></div>
<div class="row" style="top:511px"></div>
<div class="row" style="top:529px"></div>
<div class="row" style="top:547px;background:#f0f0f0;height:9px"></div>

<!-- scrollbar -->
<div class="a" style="left:993px;top:224px;width:16px;height:332px;background:linear-gradient(90deg,#f7f6f0,#faf9f5 40%,#fcfcfa 80%,#fefefe)"></div>
<div class="sbb" style="top:229px;height:17px"><svg class="a" style="left:3px;top:4px" width="9" height="7"><path d="M1 5.5L4.5 2L8 5.5" fill="none" stroke="#4d6185" stroke-width="2.2"/></svg></div>
<div class="sbb" style="left:994px;top:491px;width:15px;height:41px;background:linear-gradient(90deg,#c4d4fb,#bccffa 50%,#b4c8f8)"><div class="a" style="left:3px;top:17px;width:7px;height:1px;background:#e8eeff"></div><div class="a" style="left:3px;top:19px;width:7px;height:1px;background:#e8eeff"></div><div class="a" style="left:3px;top:21px;width:7px;height:1px;background:#e8eeff"></div></div>
<div class="sbb" style="top:539px;height:17px"><svg class="a" style="left:3px;top:5px" width="9" height="7"><path d="M1 1.5L4.5 5L8 1.5" fill="none" stroke="#4d6185" stroke-width="2.2"/></svg></div>
<!-- print icon -->
<svg class="a" style="left:984px;top:194px" width="27" height="27" viewBox="984 194 27 27">
<rect x="985" y="195" width="25" height="25" rx="3" fill="#d5d5d5"/>
<path d="M992 201.5h8M992 203.5h8M992 206h8M991 210.5h15M990 214.5h16M1002 204v13M1005.5 205v12M990 203v14" stroke="#bebebe" stroke-width="0.8" fill="none"/>
<path d="M988 199h19" stroke="#dedede" stroke-width="1"/>
</svg>

<!-- status bar -->
<div class="a" style="left:4px;top:567px;width:1016px;height:1px;background:#a8a8a8"></div>
<div class="a" style="left:4px;top:568px;width:1016px;height:28px;background:#fdfdfd"></div>
<div class="t" style="left:48.00px;top:91px;font-size:10px;font-weight:normal;color:#111;letter-spacing:1.33px">FORD</div>
<div class="t" style="left:84.60px;top:86px;font-size:14px;font-weight:bold;color:#111;letter-spacing:1.08px">Escort</div>
<div class="t" style="left:148.40px;top:90px;font-size:11px;font-weight:normal;color:#222;letter-spacing:0.99px">1.6i 16V</div>
<div class="t" style="left:204.50px;top:90px;font-size:11px;font-weight:normal;color:#222;letter-spacing:0.62px">ZETEC-E L1E 1992 1999</div>
<div class="t" style="left:347.50px;top:89px;font-size:11px;font-weight:bold;color:#108a10;letter-spacing:0.6px">(« Zmień model lub typ)</div>
<div class="t" style="left:50.60px;top:116px;font-size:10px;font-weight:normal;color:#555;letter-spacing:1.04px">Widok</div>
<div class="t" style="left:149.60px;top:116px;font-size:10px;font-weight:normal;color:#000;letter-spacing:0.94px">Konserwacja</div>
<div class="t" style="left:283.75px;top:116px;font-size:10px;font-weight:normal;color:#555;letter-spacing:1.05px">Silnik</div>
<div class="t" style="left:373.70px;top:116px;font-size:10px;font-weight:normal;color:#555;letter-spacing:1.27px">Przekładnia</div>
<div class="t" style="left:495.90px;top:116px;font-size:10px;font-weight:bold;color:#444;letter-spacing:1.28px">Układ</div>
<div class="t" style="left:474.60px;top:124px;font-size:10px;font-weight:bold;color:#444;letter-spacing:0.95px">kierowniczy i</div>
<div class="t" style="left:478.75px;top:132px;font-size:10px;font-weight:bold;color:#444;letter-spacing:0.92px">Zawieszenie</div>
<div class="t" style="left:595.90px;top:116px;font-size:10px;font-weight:normal;color:#555;letter-spacing:1.35px">Hamulce</div>
<div class="t" style="left:711.00px;top:115px;font-size:10px;font-weight:normal;color:#555;letter-spacing:1.07px">Część</div>
<div class="t" style="left:691.90px;top:124px;font-size:10px;font-weight:normal;color:#555;letter-spacing:1.1px">zewnętrzna /</div>
<div class="t" style="left:695.50px;top:132px;font-size:10px;font-weight:normal;color:#555;letter-spacing:1.09px">Wewnętrzna</div>
<div class="t" style="left:802.75px;top:116px;font-size:10px;font-weight:normal;color:#555;letter-spacing:1.15px">Elektronika</div>
<div class="t" style="left:921.90px;top:116px;font-size:10px;font-weight:normal;color:#444;letter-spacing:0.96px">Spis treści</div>
<div class="t" style="left:26.00px;top:147px;font-size:10px;font-weight:bold;color:#444;letter-spacing:1.15px">Dane Dotyczące</div>
<div class="t" style="left:46.00px;top:156px;font-size:10px;font-weight:bold;color:#444;letter-spacing:0.94px">Regulacji</div>
<div class="t" style="left:179.60px;top:147px;font-size:10px;font-weight:normal;color:#555;letter-spacing:1.16px">Smary i Płyny</div>
<div class="t" style="left:307.60px;top:147px;font-size:10px;font-weight:normal;color:#555;letter-spacing:1.22px">Rysunki Techniczne</div>
<div class="t" style="left:467.00px;top:147px;font-size:10px;font-weight:normal;color:#555;letter-spacing:0.88px">Czasy Naprawy</div>
<div class="t" style="left:600.40px;top:147px;font-size:10px;font-weight:normal;color:#555;letter-spacing:1.36px">Informacje Ogólne</div>
<div class="t" style="left:115.60px;top:206px;font-size:17px;font-weight:normal;color:#333;letter-spacing:1.34px">Dane Dotyczące</div>
<div class="t" style="left:115.60px;top:226px;font-size:17px;font-weight:normal;color:#333;letter-spacing:1.39px">Regulacji</div>
<div class="t" style="left:66.30px;top:280px;font-size:11px;font-weight:bold;color:#555;letter-spacing:0.94px">PRZEJDŹ NA STRONIE DO:</div>
<div class="t" style="left:58.40px;top:300px;font-size:11px;font-weight:normal;color:#158515;letter-spacing:0.91px">Układ kierowniczy i ustawienie koła »</div>
<div class="t" style="left:189.50px;top:315px;font-size:11px;font-weight:normal;color:#158515;letter-spacing:0.98px">Koła i opony »</div>
<div class="t" style="left:70.30px;top:330px;font-size:11px;font-weight:normal;color:#158515;letter-spacing:0.97px">Ustawienia momentu obrotowego »</div>
<div class="t" style="left:323.60px;top:425px;font-size:11px;font-weight:normal;color:#111;letter-spacing:0.86px">Rozbieżność kół, tył</div>
<div class="t" style="left:323.60px;top:443px;font-size:11px;font-weight:normal;color:#111;letter-spacing:0.89px">Pochylenie kół, tył</div>
<div class="t" style="left:308.70px;top:461px;font-size:11px;font-weight:bold;color:#111;letter-spacing:1.19px">Koła i opony</div>
<div class="t" style="left:324.90px;top:479px;font-size:11px;font-weight:normal;color:#111;letter-spacing:0.75px">Wielkość opony</div>
<div class="t" style="left:324.90px;top:497px;font-size:11px;font-weight:normal;color:#111;letter-spacing:0.74px">Opcjonalnie</div>
<div class="t" style="left:323.90px;top:515px;font-size:11px;font-weight:normal;color:#111;letter-spacing:0.86px">Ciśnienie w przedniej oponie</div>
<div class="t" style="left:323.90px;top:533px;font-size:11px;font-weight:normal;color:#111;letter-spacing:0.9px">Ciśnienie w tylnych oponach</div>
<div class="t" style="left:848.00px;top:425px;font-size:11px;font-weight:normal;color:#111;letter-spacing:1.44px">19' ± 19' (°)</div>
<div class="t" style="left:818.00px;top:443px;font-size:11px;font-weight:normal;color:#111;letter-spacing:1.18px">-2°00' - -0°30' (°)</div>
<div class="t" style="left:837.30px;top:479px;font-size:11px;font-weight:normal;color:#111;letter-spacing:0.99px">175/70R13</div>
<div class="t" style="left:837.30px;top:497px;font-size:11px;font-weight:normal;color:#111;letter-spacing:0.96px">185/60R14</div>
<div class="t" style="left:882.50px;top:515px;font-size:11px;font-weight:normal;color:#111;letter-spacing:1.26px">2.0 (bar)</div>
<div class="t" style="left:881.50px;top:533px;font-size:11px;font-weight:normal;color:#111;letter-spacing:1.39px">1.8 (bar)</div>
<div class="a" style="left:308px;top:548px;width:685px;height:8px;overflow:hidden"><div class="t" style="left:1.7px;top:3px;font-size:11px;font-weight:bold;color:#111;letter-spacing:1.19px">Ustawienia momentu obrotowego</div></div>
<!-- status noise -->
<svg class="a" style="left:0;top:560px" width="1024" height="40" viewBox="0 560 1024 40"><rect x="56" y="576" width="1" height="1" fill="#d0d0d0"/><rect x="58" y="574" width="2" height="1" fill="#e8e8e8"/><rect x="59" y="574" width="1" height="1" fill="#dcdcdc"/><rect x="63" y="575" width="2" height="1" fill="#e4e4e4"/><rect x="64" y="574" width="1" height="1" fill="#e8e8e8"/><rect x="89" y="574" width="1" height="1" fill="#e8e8e8"/><rect x="98" y="575" width="1" height="1" fill="#dcdcdc"/><rect x="103" y="574" width="2" height="1" fill="#d0d0d0"/><rect x="104" y="578" width="2" height="1" fill="#dcdcdc"/><rect x="118" y="574" width="2" height="1" fill="#e4e4e4"/><rect x="120" y="577" width="2" height="1" fill="#e8e8e8"/><rect x="121" y="579" width="1" height="1" fill="#e4e4e4"/><rect x="126" y="577" width="1" height="1" fill="#dcdcdc"/><rect x="130" y="579" width="1" height="1" fill="#e8e8e8"/><rect x="134" y="579" width="2" height="1" fill="#e4e4e4"/><rect x="136" y="575" width="1" height="1" fill="#dcdcdc"/><rect x="138" y="575" width="1" height="1" fill="#e4e4e4"/><rect x="139" y="579" width="1" height="1" fill="#e8e8e8"/><rect x="141" y="575" width="1" height="1" fill="#e8e8e8"/><rect x="169" y="576" width="1" height="1" fill="#c4c4c4"/><rect x="170" y="573" width="1" height="1" fill="#d0d0d0"/><rect x="175" y="576" width="2" height="1" fill="#e8e8e8"/><rect x="176" y="577" width="1" height="1" fill="#e4e4e4"/><rect x="178" y="580" width="2" height="1" fill="#c4c4c4"/><rect x="180" y="574" width="1" height="1" fill="#e4e4e4"/><rect x="184" y="578" width="1" height="1" fill="#dcdcdc"/><rect x="186" y="574" width="1" height="1" fill="#e4e4e4"/><rect x="189" y="578" width="1" height="1" fill="#dcdcdc"/><rect x="193" y="580" width="1" height="1" fill="#e4e4e4"/><rect x="197" y="578" width="1" height="1" fill="#c4c4c4"/><rect x="216" y="576" width="1" height="1" fill="#e4e4e4"/><rect x="220" y="578" width="1" height="1" fill="#d0d0d0"/><rect x="225" y="578" width="2" height="1" fill="#d0d0d0"/><rect x="228" y="575" width="1" height="1" fill="#dcdcdc"/><rect x="241" y="575" width="1" height="1" fill="#d0d0d0"/><rect x="244" y="575" width="1" height="1" fill="#c4c4c4"/><rect x="246" y="577" width="1" height="1" fill="#dcdcdc"/><rect x="249" y="579" width="1" height="1" fill="#dcdcdc"/><rect x="273" y="575" width="1" height="1" fill="#e8e8e8"/><rect x="278" y="575" width="1" height="1" fill="#c4c4c4"/><rect x="280" y="580" width="1" height="1" fill="#d0d0d0"/><rect x="281" y="577" width="1" height="1" fill="#d0d0d0"/><rect x="298" y="576" width="1" height="1" fill="#c4c4c4"/><rect x="301" y="576" width="1" height="1" fill="#c4c4c4"/><rect x="302" y="577" width="1" height="1" fill="#d0d0d0"/><rect x="352" y="579" width="2" height="1" fill="#e8e8e8"/><rect x="353" y="576" width="1" height="1" fill="#e4e4e4"/><rect x="354" y="578" width="1" height="1" fill="#d0d0d0"/><rect x="357" y="578" width="1" height="1" fill="#e8e8e8"/><rect x="359" y="576" width="1" height="1" fill="#d0d0d0"/><rect x="360" y="573" width="1" height="1" fill="#dcdcdc"/><rect x="380" y="573" width="2" height="1" fill="#dcdcdc"/><rect x="382" y="573" width="1" height="1" fill="#d0d0d0"/><rect x="383" y="576" width="1" height="1" fill="#d0d0d0"/><rect x="386" y="579" width="1" height="1" fill="#e4e4e4"/><rect x="387" y="576" width="1" height="1" fill="#d0d0d0"/><rect x="388" y="575" width="1" height="1" fill="#dcdcdc"/><rect x="391" y="580" width="1" height="1" fill="#e8e8e8"/><rect x="392" y="573" width="1" height="1" fill="#e4e4e4"/><rect x="393" y="576" width="2" height="1" fill="#e8e8e8"/><rect x="394" y="580" width="2" height="1" fill="#d0d0d0"/><rect x="399" y="576" width="1" height="1" fill="#dcdcdc"/><rect x="400" y="575" width="1" height="1" fill="#c4c4c4"/><rect x="403" y="577" width="1" height="1" fill="#c4c4c4"/><rect x="404" y="579" width="1" height="1" fill="#e8e8e8"/><rect x="407" y="575" width="1" height="1" fill="#dcdcdc"/><rect x="409" y="578" width="1" height="1" fill="#e8e8e8"/><rect x="448" y="579" width="2" height="1" fill="#d0d0d0"/><rect x="449" y="576" width="1" height="1" fill="#dcdcdc"/><rect x="450" y="574" width="2" height="1" fill="#dcdcdc"/><rect x="453" y="576" width="1" height="1" fill="#d0d0d0"/><rect x="458" y="580" width="1" height="1" fill="#dcdcdc"/><rect x="461" y="579" width="1" height="1" fill="#e8e8e8"/><rect x="466" y="576" width="1" height="1" fill="#d0d0d0"/><rect x="467" y="578" width="2" height="1" fill="#d0d0d0"/><rect x="495" y="574" width="1" height="1" fill="#e8e8e8"/><rect x="497" y="580" width="1" height="1" fill="#e4e4e4"/><rect x="499" y="576" width="2" height="1" fill="#dcdcdc"/><rect x="519" y="575" width="1" height="1" fill="#e4e4e4"/><rect x="523" y="580" width="2" height="1" fill="#d0d0d0"/><rect x="524" y="574" width="2" height="1" fill="#dcdcdc"/><rect x="525" y="577" width="2" height="1" fill="#c4c4c4"/><rect x="527" y="576" width="1" height="1" fill="#e4e4e4"/><rect x="549" y="580" width="2" height="1" fill="#e4e4e4"/><rect x="550" y="576" width="1" height="1" fill="#d0d0d0"/><rect x="551" y="577" width="1" height="1" fill="#e4e4e4"/><rect x="554" y="574" width="1" height="1" fill="#e4e4e4"/><rect x="597" y="578" width="1" height="1" fill="#c4c4c4"/><rect x="598" y="578" width="1" height="1" fill="#d0d0d0"/><rect x="601" y="576" width="1" height="1" fill="#d0d0d0"/><rect x="602" y="574" width="2" height="1" fill="#c4c4c4"/><rect x="607" y="573" width="1" height="1" fill="#e4e4e4"/><rect x="608" y="577" width="1" height="1" fill="#dcdcdc"/><rect x="611" y="578" width="1" height="1" fill="#c4c4c4"/><rect x="618" y="579" width="1" height="1" fill="#c4c4c4"/><rect x="620" y="573" width="1" height="1" fill="#e8e8e8"/><rect x="621" y="579" width="1" height="1" fill="#e4e4e4"/><rect x="622" y="577" width="1" height="1" fill="#c4c4c4"/><rect x="623" y="579" width="1" height="1" fill="#d0d0d0"/><rect x="625" y="580" width="1" height="1" fill="#e8e8e8"/><rect x="627" y="580" width="1" height="1" fill="#c4c4c4"/><rect x="629" y="575" width="1" height="1" fill="#e4e4e4"/><rect x="647" y="573" width="2" height="1" fill="#c4c4c4"/><rect x="651" y="573" width="1" height="1" fill="#c4c4c4"/><rect x="658" y="576" width="2" height="1" fill="#c4c4c4"/><rect x="661" y="573" width="1" height="1" fill="#dcdcdc"/><rect x="667" y="580" width="1" height="1" fill="#c4c4c4"/><rect x="683" y="580" width="1" height="1" fill="#d0d0d0"/><rect x="684" y="575" width="1" height="1" fill="#dcdcdc"/><rect x="686" y="575" width="2" height="1" fill="#e4e4e4"/><rect x="688" y="574" width="1" height="1" fill="#e4e4e4"/><rect x="690" y="573" width="1" height="1" fill="#d0d0d0"/><rect x="692" y="578" width="2" height="1" fill="#dcdcdc"/><rect x="695" y="579" width="1" height="1" fill="#e4e4e4"/><rect x="696" y="580" width="1" height="1" fill="#c4c4c4"/><rect x="697" y="579" width="1" height="1" fill="#e4e4e4"/><rect x="716" y="577" width="1" height="1" fill="#e8e8e8"/><rect x="717" y="576" width="1" height="1" fill="#e4e4e4"/><rect x="718" y="576" width="1" height="1" fill="#e4e4e4"/><rect x="719" y="580" width="1" height="1" fill="#e8e8e8"/><rect x="723" y="575" width="1" height="1" fill="#c4c4c4"/><rect x="724" y="575" width="1" height="1" fill="#c4c4c4"/><rect x="726" y="580" width="1" height="1" fill="#e4e4e4"/><rect x="729" y="575" width="2" height="1" fill="#e8e8e8"/><rect x="730" y="579" width="1" height="1" fill="#e4e4e4"/><rect x="732" y="574" width="1" height="1" fill="#e4e4e4"/><rect x="735" y="576" width="1" height="1" fill="#c4c4c4"/><rect x="737" y="579" width="1" height="1" fill="#d0d0d0"/><rect x="739" y="580" width="1" height="1" fill="#dcdcdc"/><rect x="742" y="579" width="2" height="1" fill="#dcdcdc"/><rect x="743" y="573" width="1" height="1" fill="#c4c4c4"/><rect x="745" y="576" width="1" height="1" fill="#d0d0d0"/><rect x="747" y="573" width="1" height="1" fill="#e4e4e4"/><rect x="767" y="576" width="2" height="1" fill="#d0d0d0"/><rect x="792" y="577" width="1" height="1" fill="#dcdcdc"/><rect x="793" y="578" width="1" height="1" fill="#c4c4c4"/><rect x="798" y="579" width="1" height="1" fill="#d0d0d0"/><rect x="801" y="579" width="1" height="1" fill="#d0d0d0"/><rect x="802" y="574" width="1" height="1" fill="#dcdcdc"/><rect x="806" y="575" width="2" height="1" fill="#c4c4c4"/><rect x="812" y="577" width="1" height="1" fill="#e4e4e4"/><rect x="816" y="576" width="1" height="1" fill="#dcdcdc"/><rect x="817" y="577" width="1" height="1" fill="#e8e8e8"/><rect x="818" y="579" width="1" height="1" fill="#e4e4e4"/><rect x="820" y="574" width="1" height="1" fill="#c4c4c4"/><rect x="821" y="580" width="2" height="1" fill="#dcdcdc"/><rect x="823" y="577" width="1" height="1" fill="#dcdcdc"/><rect x="824" y="576" width="1" height="1" fill="#d0d0d0"/><rect x="826" y="577" width="1" height="1" fill="#d0d0d0"/><rect x="829" y="573" width="1" height="1" fill="#e4e4e4"/><rect x="840" y="576" width="1" height="1" fill="#d0d0d0"/><rect x="844" y="573" width="2" height="1" fill="#c4c4c4"/><rect x="845" y="574" width="1" height="1" fill="#c4c4c4"/><rect x="847" y="575" width="1" height="1" fill="#c4c4c4"/><rect x="849" y="577" width="1" height="1" fill="#c4c4c4"/><rect x="865" y="578" width="2" height="1" fill="#dcdcdc"/><rect x="867" y="573" width="1" height="1" fill="#c4c4c4"/><rect x="873" y="573" width="1" height="1" fill="#d0d0d0"/><rect x="876" y="578" width="1" height="1" fill="#e8e8e8"/><rect x="877" y="577" width="1" height="1" fill="#dcdcdc"/><rect x="879" y="580" width="1" height="1" fill="#dcdcdc"/><rect x="880" y="573" width="1" height="1" fill="#c4c4c4"/><rect x="881" y="579" width="1" height="1" fill="#d0d0d0"/><rect x="886" y="580" width="1" height="1" fill="#dcdcdc"/><rect x="887" y="575" width="1" height="1" fill="#c4c4c4"/><rect x="888" y="576" width="1" height="1" fill="#dcdcdc"/><rect x="893" y="579" width="2" height="1" fill="#e8e8e8"/><rect x="910" y="579" width="2" height="1" fill="#e4e4e4"/><rect x="912" y="573" width="2" height="1" fill="#e8e8e8"/><rect x="920" y="578" width="1" height="1" fill="#c4c4c4"/><rect x="921" y="580" width="1" height="1" fill="#e8e8e8"/><rect x="922" y="575" width="1" height="1" fill="#d0d0d0"/><rect x="925" y="579" width="1" height="1" fill="#dcdcdc"/><rect x="930" y="580" width="1" height="1" fill="#e4e4e4"/><rect x="933" y="578" width="1" height="1" fill="#e8e8e8"/><rect x="934" y="577" width="1" height="1" fill="#c4c4c4"/><rect x="935" y="580" width="1" height="1" fill="#dcdcdc"/><rect x="937" y="578" width="1" height="1" fill="#d0d0d0"/><rect x="938" y="575" width="1" height="1" fill="#e4e4e4"/><rect x="940" y="577" width="1" height="1" fill="#d0d0d0"/><rect x="973" y="578" width="2" height="1" fill="#d0d0d0"/><rect x="974" y="573" width="1" height="1" fill="#e4e4e4"/><rect x="975" y="578" width="1" height="1" fill="#d0d0d0"/><rect x="976" y="577" width="2" height="1" fill="#e8e8e8"/><rect x="979" y="580" width="1" height="1" fill="#dcdcdc"/><rect x="980" y="573" width="1" height="1" fill="#e8e8e8"/><rect x="998" y="575" width="1" height="1" fill="#dcdcdc"/><rect x="1001" y="576" width="2" height="1" fill="#dcdcdc"/><rect x="1002" y="575" width="2" height="1" fill="#e4e4e4"/><rect x="1005" y="578" width="2" height="1" fill="#e8e8e8"/><rect x="1009" y="573" width="1" height="1" fill="#d0d0d0"/><rect x="8" y="585" width="1" height="1" fill="#d0d0d0"/><rect x="11" y="591" width="2" height="1" fill="#dcdcdc"/><rect x="13" y="589" width="1" height="1" fill="#d0d0d0"/><rect x="40" y="592" width="1" height="1" fill="#dcdcdc"/><rect x="42" y="585" width="1" height="1" fill="#d0d0d0"/><rect x="64" y="588" width="1" height="1" fill="#d0d0d0"/><rect x="65" y="588" width="1" height="1" fill="#dcdcdc"/><rect x="67" y="591" width="1" height="1" fill="#e4e4e4"/><rect x="95" y="585" width="1" height="1" fill="#c4c4c4"/><rect x="97" y="588" width="1" height="1" fill="#c4c4c4"/><rect x="99" y="585" width="1" height="1" fill="#d0d0d0"/><rect x="100" y="587" width="1" height="1" fill="#e4e4e4"/><rect x="102" y="587" width="1" height="1" fill="#d0d0d0"/><rect x="104" y="590" width="1" height="1" fill="#dcdcdc"/><rect x="109" y="588" width="1" height="1" fill="#d0d0d0"/><rect x="110" y="586" width="2" height="1" fill="#e4e4e4"/><rect x="111" y="586" width="1" height="1" fill="#dcdcdc"/><rect x="112" y="591" width="1" height="1" fill="#e4e4e4"/><rect x="115" y="590" width="2" height="1" fill="#e4e4e4"/><rect x="118" y="591" width="2" height="1" fill="#d0d0d0"/><rect x="120" y="592" width="1" height="1" fill="#d0d0d0"/><rect x="124" y="591" width="1" height="1" fill="#d0d0d0"/><rect x="125" y="585" width="1" height="1" fill="#d0d0d0"/><rect x="129" y="592" width="1" height="1" fill="#e8e8e8"/><rect x="156" y="588" width="1" height="1" fill="#c4c4c4"/><rect x="157" y="586" width="1" height="1" fill="#c4c4c4"/><rect x="163" y="585" width="1" height="1" fill="#e4e4e4"/><rect x="164" y="591" width="1" height="1" fill="#e8e8e8"/><rect x="167" y="592" width="1" height="1" fill="#dcdcdc"/><rect x="168" y="590" width="1" height="1" fill="#e8e8e8"/><rect x="172" y="592" width="1" height="1" fill="#c4c4c4"/><rect x="185" y="588" width="1" height="1" fill="#e4e4e4"/><rect x="193" y="588" width="1" height="1" fill="#e4e4e4"/><rect x="194" y="586" width="1" height="1" fill="#dcdcdc"/><rect x="195" y="587" width="1" height="1" fill="#dcdcdc"/><rect x="198" y="586" width="1" height="1" fill="#e4e4e4"/><rect x="201" y="591" width="1" height="1" fill="#dcdcdc"/><rect x="203" y="591" width="1" height="1" fill="#d0d0d0"/><rect x="209" y="588" width="1" height="1" fill="#dcdcdc"/><rect x="211" y="586" width="1" height="1" fill="#c4c4c4"/><rect x="274" y="585" width="2" height="1" fill="#c4c4c4"/><rect x="276" y="589" width="1" height="1" fill="#e8e8e8"/><rect x="277" y="588" width="1" height="1" fill="#e8e8e8"/><rect x="278" y="592" width="1" height="1" fill="#e8e8e8"/><rect x="286" y="587" width="1" height="1" fill="#c4c4c4"/><rect x="290" y="591" width="1" height="1" fill="#c4c4c4"/><rect x="291" y="591" width="1" height="1" fill="#c4c4c4"/><rect x="293" y="589" width="1" height="1" fill="#c4c4c4"/><rect x="297" y="586" width="2" height="1" fill="#dcdcdc"/><rect x="301" y="591" width="1" height="1" fill="#c4c4c4"/><rect x="436" y="592" width="2" height="1" fill="#c4c4c4"/><rect x="438" y="590" width="1" height="1" fill="#dcdcdc"/><rect x="440" y="590" width="1" height="1" fill="#dcdcdc"/><rect x="442" y="585" width="1" height="1" fill="#dcdcdc"/><rect x="444" y="586" width="1" height="1" fill="#e8e8e8"/><rect x="446" y="592" width="1" height="1" fill="#e4e4e4"/><rect x="447" y="591" width="1" height="1" fill="#e8e8e8"/><rect x="451" y="589" width="2" height="1" fill="#dcdcdc"/><rect x="458" y="588" width="2" height="1" fill="#dcdcdc"/><rect x="460" y="592" width="2" height="1" fill="#dcdcdc"/><rect x="461" y="587" width="1" height="1" fill="#e8e8e8"/><rect x="462" y="590" width="2" height="1" fill="#c4c4c4"/><rect x="487" y="585" width="1" height="1" fill="#e4e4e4"/><rect x="491" y="591" width="1" height="1" fill="#dcdcdc"/><rect x="492" y="590" width="2" height="1" fill="#e4e4e4"/><rect x="496" y="590" width="1" height="1" fill="#c4c4c4"/><rect x="594" y="590" width="2" height="1" fill="#dcdcdc"/><rect x="596" y="590" width="1" height="1" fill="#e4e4e4"/><rect x="600" y="591" width="1" height="1" fill="#e8e8e8"/><rect x="602" y="585" width="2" height="1" fill="#dcdcdc"/><rect x="613" y="592" width="1" height="1" fill="#dcdcdc"/><rect x="617" y="585" width="1" height="1" fill="#e4e4e4"/><rect x="620" y="589" width="2" height="1" fill="#dcdcdc"/><rect x="621" y="585" width="1" height="1" fill="#c4c4c4"/><rect x="674" y="591" width="1" height="1" fill="#e8e8e8"/><rect x="677" y="592" width="1" height="1" fill="#dcdcdc"/><rect x="680" y="586" width="1" height="1" fill="#d0d0d0"/><rect x="682" y="585" width="1" height="1" fill="#e4e4e4"/><rect x="689" y="586" width="2" height="1" fill="#e4e4e4"/><rect x="692" y="585" width="1" height="1" fill="#d0d0d0"/><rect x="693" y="586" width="1" height="1" fill="#c4c4c4"/><rect x="694" y="587" width="1" height="1" fill="#c4c4c4"/><rect x="695" y="592" width="1" height="1" fill="#c4c4c4"/><rect x="696" y="586" width="1" height="1" fill="#e4e4e4"/><rect x="704" y="585" width="1" height="1" fill="#e8e8e8"/><rect x="795" y="592" width="1" height="1" fill="#e4e4e4"/><rect x="796" y="589" width="1" height="1" fill="#c4c4c4"/><rect x="800" y="587" width="1" height="1" fill="#e8e8e8"/><rect x="801" y="592" width="1" height="1" fill="#e4e4e4"/><rect x="808" y="585" width="2" height="1" fill="#c4c4c4"/><rect x="812" y="591" width="1" height="1" fill="#c4c4c4"/><rect x="815" y="591" width="1" height="1" fill="#e8e8e8"/><rect x="820" y="588" width="1" height="1" fill="#d0d0d0"/><rect x="822" y="590" width="1" height="1" fill="#c4c4c4"/><rect x="823" y="592" width="1" height="1" fill="#e4e4e4"/><rect x="846" y="585" width="1" height="1" fill="#d0d0d0"/><rect x="847" y="592" width="1" height="1" fill="#e8e8e8"/><rect x="848" y="589" width="1" height="1" fill="#c4c4c4"/><rect x="853" y="585" width="1" height="1" fill="#e4e4e4"/><rect x="856" y="585" width="1" height="1" fill="#e8e8e8"/><rect x="966" y="586" width="2" height="1" fill="#e8e8e8"/><rect x="967" y="587" width="1" height="1" fill="#e4e4e4"/><rect x="969" y="585" width="1" height="1" fill="#e4e4e4"/><rect x="970" y="585" width="1" height="1" fill="#d0d0d0"/><rect x="975" y="587" width="1" height="1" fill="#e4e4e4"/><rect x="978" y="592" width="2" height="1" fill="#d0d0d0"/><rect x="979" y="589" width="1" height="1" fill="#c4c4c4"/><rect x="989" y="588" width="1" height="1" fill="#d0d0d0"/></svg>

</body></html>
